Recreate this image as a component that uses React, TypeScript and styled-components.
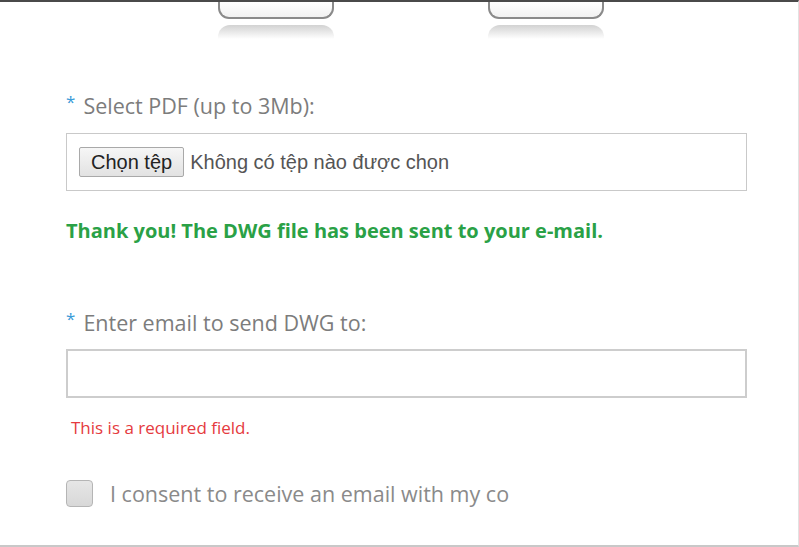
import styled, { createGlobalStyle } from "styled-components";

const Global = createGlobalStyle`
  html, body {
    margin: 0;
    padding: 0;
    background: #fff;
  }
`;

const Page = styled.div`
  width: 799px;
  height: 547px;
  box-sizing: border-box;
  border-top: 2px solid #4a4a4a;
  border-right: 1px solid #e2e2e2;
  border-bottom: 2px solid #c8c8c8;
  overflow: hidden;
  font-family: "Open Sans", "Noto Sans", sans-serif;
`;

const Tabs = styled.div`
  display: flex;
  gap: 154px;
  padding-left: 218px;
`;

const TabWrap = styled.div`
  display: flex;
  flex-direction: column;
  gap: 6px;
  width: 116px;
`;

const Tab = styled.div`
  height: 15px;
  box-sizing: content-box;
  border: 2px solid #8a8a8a;
  border-top: none;
  border-radius: 0 0 11px 11px;
  background: linear-gradient(#ffffff, #f1f1f1);
`;

const Reflection = styled.div`
  height: 14px;
  border-radius: 12px 12px 0 0;
  background: linear-gradient(#d2d2d2, rgba(255, 255, 255, 0));
`;

const Form = styled.div`
  width: 681px;
  margin-left: 66px;
  padding-top: 50px;
`;

const Label = styled.div<{ top?: number }>`
  font-size: 21.5px;
  color: #7c7c7c;
  line-height: 26px;
  margin-top: ${(p) => p.top ?? 0}px;
`;

const Star = styled.span`
  color: #3b9bd8;
  font-size: 17px;
  vertical-align: 6px;
  margin-right: 8px;
`;

const FileBox = styled.div`
  margin-top: 14px;
  height: 56px;
  border: 1px solid #c9c9c9;
  display: flex;
  align-items: center;
  padding-left: 12px;
  gap: 6px;
`;

const FileButton = styled.button`
  height: 30px;
  padding: 0 11px;
  font-family: "Liberation Sans", Arial, sans-serif;
  font-size: 20px;
  color: #222;
  background: linear-gradient(#f6f6f6, #e2e2e2);
  border: 1px solid #a9a9a9;
  border-radius: 2px;
`;

const FileText = styled.span`
  font-family: "Liberation Sans", Arial, sans-serif;
  font-size: 20px;
  color: #555;
`;

const Success = styled.div`
  margin-top: 27px;
  font-size: 20px;
  font-weight: 700;
  color: #2aa146;
  line-height: 26px;
`;

const EmailInput = styled.input`
  display: block;
  margin-top: 13px;
  width: 100%;
  height: 49px;
  box-sizing: border-box;
  border: 2px solid #cdcdcd;
  outline: none;
`;

const ErrorText = styled.div`
  margin-top: 19px;
  margin-left: 5px;
  font-size: 17px;
  color: #e53a40;
  line-height: 22px;
`;

const ConsentRow = styled.div`
  margin-top: 40px;
  height: 28px;
  display: flex;
  align-items: center;
  gap: 17px;
  width: 443px;
  overflow: hidden;
  white-space: nowrap;
`;

const Check = styled.span`
  flex: none;
  width: 27px;
  height: 27px;
  box-sizing: border-box;
  border: 1px solid #b5b5b5;
  border-radius: 4px;
  background: linear-gradient(#e6e6e6, #d8d8d8);
`;

const ConsentText = styled.span`
  font-size: 21.5px;
  color: #8a8a8a;
`;

export default function App() {
  return (
    <Page>
      <Global />
      <Tabs>
        <TabWrap>
          <Tab />
          <Reflection />
        </TabWrap>
        <TabWrap>
          <Tab />
          <Reflection />
        </TabWrap>
      </Tabs>
      <Form>
        <Label>
          <Star>*</Star>Select PDF (up to 3Mb):
        </Label>
        <FileBox>
          <FileButton>Chọn tệp</FileButton>
          <FileText>Không có tệp nào được chọn</FileText>
        </FileBox>
        <Success>Thank you! The DWG file has been sent to your e-mail.</Success>
        <Label top={62}>
          <Star>*</Star>Enter email to send DWG to:
        </Label>
        <EmailInput type="email" />
        <ErrorText>This is a required field.</ErrorText>
        <ConsentRow>
          <Check />
          <ConsentText>I consent to receive an email with my converted file</ConsentText>
        </ConsentRow>
      </Form>
    </Page>
  );
}
